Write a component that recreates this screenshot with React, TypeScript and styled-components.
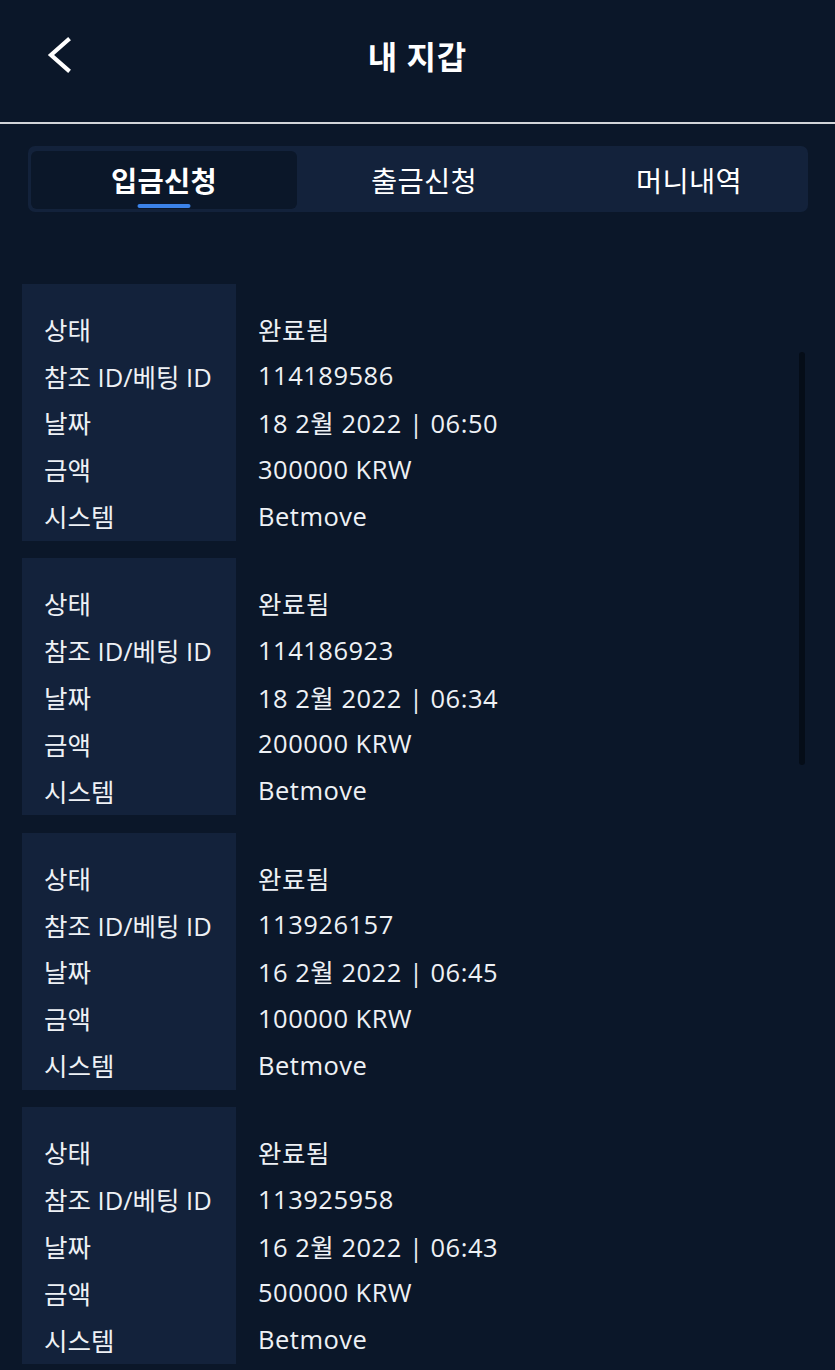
import React from "react";
import styled, { createGlobalStyle } from "styled-components";

const Global = createGlobalStyle`
  html, body { margin: 0; padding: 0; background: #0b1729; }
  body { font-family: "Open Sans", "Noto Sans CJK KR", sans-serif; color: #eef1f5; }
  * { box-sizing: border-box; }
`;

const Page = styled.div`
  position: relative;
  width: 835px;
  min-height: 1370px;
  background: #0b1729;
  overflow: hidden;
`;

const Header = styled.header`
  height: 124px;
  border-bottom: 2px solid #d2d4d8;
  display: flex;
  align-items: center;
  justify-content: center;
  position: relative;
  padding-bottom: 12px;
`;

const BackButton = styled.button`
  position: absolute;
  left: 44px;
  top: 32px;
  width: 34px;
  height: 46px;
  background: none;
  border: none;
  padding: 0;
  cursor: pointer;
`;

const Title = styled.h1`
  margin: 0;
  font-family: "Noto Sans CJK KR", "Noto Sans", sans-serif;
  font-weight: 700;
  font-size: 32px;
  color: #ffffff;
  letter-spacing: 1px;
`;

const TabBar = styled.nav`
  margin: 22px 27px 0 28px;
  height: 66px;
  background: #13223b;
  border-radius: 7px;
  padding: 5px 3px 3px 3px;
  display: grid;
  grid-template-columns: 266px 254px 1fr;
`;

const Tab = styled.div<{ $active?: boolean; $shift?: number }>`
  position: relative;
  display: flex;
  align-items: center;
  justify-content: center;
  padding-bottom: 2px;
  padding-left: ${(p) => (p.$shift ?? 0)}px;
  border-radius: 6px;
  background: ${(p) => (p.$active ? "#0b1729" : "transparent")};
  font-family: "Noto Sans CJK KR", "Noto Sans", sans-serif;
  font-size: 28.5px;
  font-weight: ${(p) => (p.$active ? 700 : 400)};
  color: #ffffff;
  letter-spacing: 0.3px;
`;

const Underline = styled.span`
  position: absolute;
  bottom: 1px;
  left: 50%;
  transform: translateX(-50%);
  width: 53px;
  height: 4px;
  border-radius: 2px;
  background: #3b82e8;
`;

const List = styled.div`
  margin-top: 72px;
  padding: 0 22px;
  display: flex;
  flex-direction: column;
  gap: 17.5px;
`;

const Card = styled.div`
  display: grid;
  grid-template-columns: 214px 1fr;
`;

const LabelCol = styled.div`
  background: #13223b;
  padding: 23px 0 0 22px;
  display: flex;
  flex-direction: column;
`;

const ValueCol = styled.div`
  padding: 23px 0 0 22px;
  display: flex;
  flex-direction: column;
  letter-spacing: 0.5px;
`;

const Cell = styled.div`
  height: 46.8px;
  display: flex;
  align-items: center;
  font-family: "Open Sans", "Noto Sans CJK KR", sans-serif;
  font-size: 25.5px;
  color: #eef1f5;
  white-space: nowrap;
  padding-bottom: 4px;
`;

const ScrollThumb = styled.div`
  position: absolute;
  left: 799px;
  top: 352px;
  width: 6px;
  height: 413px;
  border-radius: 3px;
  background: #050d18;
`;

const labels = ["상태", "참조 ID/베팅 ID", "날짜", "금액", "시스템"];

const records = [
  { id: "114189586", date: "18 2월 2022 | 06:50", amount: "300000 KRW" },
  { id: "114186923", date: "18 2월 2022 | 06:34", amount: "200000 KRW" },
  { id: "113926157", date: "16 2월 2022 | 06:45", amount: "100000 KRW" },
  { id: "113925958", date: "16 2월 2022 | 06:43", amount: "500000 KRW" },
];

export default function App() {
  return (
    <Page>
      <Global />
      <Header>
        <BackButton aria-label="back">
          <svg width="34" height="46" viewBox="0 0 34 46">
            <polyline
              points="24,8 7,23 24,38"
              fill="none"
              stroke="#ffffff"
              strokeWidth="4.2"
              strokeLinecap="square"
              strokeLinejoin="miter"
            />
          </svg>
        </BackButton>
        <Title>내 지갑</Title>
      </Header>
      <TabBar>
        <Tab $active>
          입금신청
          <Underline />
        </Tab>
        <Tab>출금신청</Tab>
        <Tab $shift={22}>머니내역</Tab>
      </TabBar>
      <List>
        {records.map((r) => (
          <Card key={r.id}>
            <LabelCol>
              {labels.map((l) => (
                <Cell key={l}>{l}</Cell>
              ))}
            </LabelCol>
            <ValueCol>
              <Cell>완료됨</Cell>
              <Cell>{r.id}</Cell>
              <Cell>{r.date}</Cell>
              <Cell>{r.amount}</Cell>
              <Cell>Betmove</Cell>
            </ValueCol>
          </Card>
        ))}
      </List>
      <ScrollThumb />
    </Page>
  );
}
